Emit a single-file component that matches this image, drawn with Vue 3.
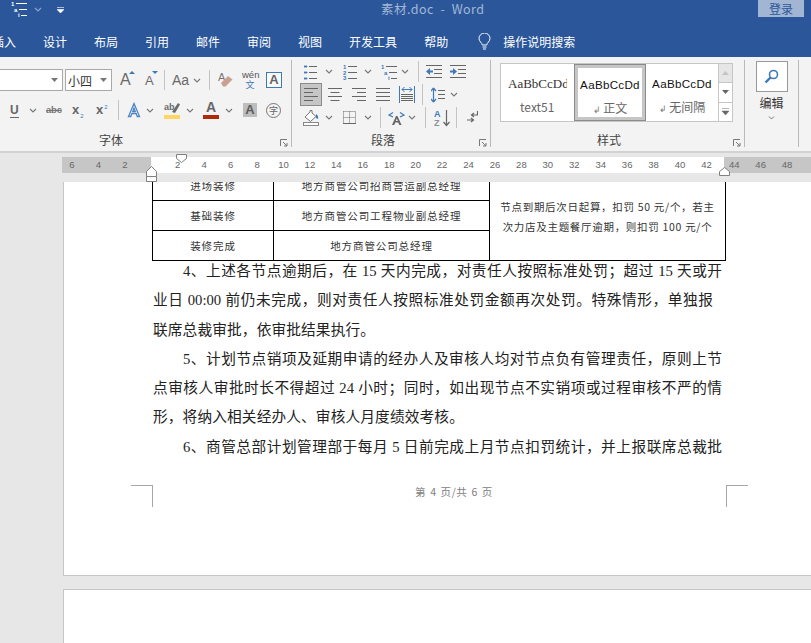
<script setup>
const tabs = ['插入', '设计', '布局', '引用', '邮件', '审阅', '视图', '开发工具', '帮助']

const rulerLeft = [6, 4, 2]
const rulerMid = Array.from({ length: 21 }, (_, i) => (i + 1) * 2)
const rulerRight = [44, 46, 48]

const tableRows = [
  { stage: '进场装修', owner: '地方商管公司招商营运副总经理' },
  { stage: '基础装修', owner: '地方商管公司工程物业副总经理' },
  { stage: '装修完成', owner: '地方商管公司总经理' },
]
</script>

<template>
  <div class="app">
    <header class="titlebar">
      <svg class="qat-list" width="17" height="16" viewBox="0 0 17 16">
        <g font-size="6" font-weight="700" font-family="Liberation Sans" fill="#fff"><text y="5">1</text><text x="3" y="11">a</text><text x="7" y="16">i</text></g>
        <path d="M5 2.500h11M8 8.500h8M10 14.500h6" stroke="#fff" />
      </svg>
      <svg class="ml6" width="8" height="5" viewBox="0 0 8 5"><path d="M1 1l3 3 3-3" fill="none" stroke="#8ba3c9" stroke-width="1.2" /></svg>
      <svg class="ml15" width="7" height="7" viewBox="0 0 7 7"><path d="M0 .5h7M0 2.5h7l-3.5 3.5z" fill="#fff" stroke="#fff" stroke-width=".6" /></svg>
      <span class="doc-title">素材.doc&nbsp; -&nbsp; Word</span>
      <button class="login" type="button">登录</button>
    </header>

    <nav class="tabbar">
      <span v-for="tab in tabs" :key="tab" class="tab">{{ tab }}</span>
      <svg class="bulb" width="13" height="17" viewBox="0 0 13 17">
        <path d="M4.3 12c0-2-3.3-3.500-3.300-6.500a5.500 5.500 0 0 1 11 0c0 3-3.300 4.500-3.300 6.500zM4.500 14h4M5 16h3" fill="none" stroke="#fff" />
      </svg>
      <span class="tab tell">操作说明搜索</span>
    </nav>

    <section class="ribbon">
      <div class="group group-font">
        <div class="font-rows">
          <div class="row">
            <div class="combo combo-name"><svg width="7" height="4" viewBox="0 0 7 4"><path d="M0 0h7L3.500 4z" fill="#777" /></svg></div>
            <div class="combo combo-size ml2">
              <span>小四</span>
              <svg width="7" height="4" viewBox="0 0 7 4"><path d="M0 0h7L3.500 4z" fill="#777" /></svg>
            </div>
            <span class="tool grow-a ml8">A<i class="tri tri-up"></i></span>
            <span class="tool shrink-a ml12">A<i class="tri tri-down"></i></span>
            <i class="sep ml9"></i>
            <span class="aa ml7">Aa</span>
            <svg class="ml5" width="8" height="5" viewBox="0 0 8 5"><path d="M1 1l3 3 3-3" fill="none" stroke="#777" stroke-width="1.100" /></svg>
            <i class="sep ml8"></i>
            <svg class="ml8" width="15" height="18" viewBox="0 0 15 18">
              <text x="0" y="10" font-size="11" font-family="Liberation Sans" fill="#777">A</text>
              <path d="M3 12l7-7 4.500 3.500-7 7H5z" fill="#c9a193" />
            </svg>
            <span class="wen ml9">wén<b>文</b></span>
            <span class="box-a ml8">A</span>
          </div>
          <div class="row">
            <span class="under ml10">U</span>
            <svg class="ml10" width="8" height="5" viewBox="0 0 8 5"><path d="M1 1l3 3 3-3" fill="none" stroke="#777" stroke-width="1.100" /></svg>
            <span class="strike ml9">abc</span>
            <span class="script ml10">x<sub>2</sub></span>
            <span class="script ml11">x<sup>2</sup></span>
            <i class="sep ml9"></i>
            <svg class="ml8" width="14" height="16" viewBox="0 0 14 16">
              <path d="M7 1.500L12.500 14.500h-2.200l-1.200-3H4.900l-1.200 3H1.500zM5.700 9.500h2.600L7 6z" fill="#fff" stroke="#4c84c4" stroke-width="1.300" />
            </svg>
            <svg class="ml5" width="8" height="5" viewBox="0 0 8 5"><path d="M1 1l3 3 3-3" fill="none" stroke="#777" stroke-width="1.100" /></svg>
            <svg class="ml10" width="16" height="18" viewBox="0 0 16 18">
              <text x="0" y="9" font-size="9" font-family="Liberation Sans" font-weight="700" fill="#6a6a6a">ab</text>
              <path d="M8 11L14 2l2 1.500-5 8.500z" fill="#6a6a6a" />
              <rect y="14" width="16" height="4" fill="#fdd663" />
            </svg>
            <svg class="ml6" width="8" height="5" viewBox="0 0 8 5"><path d="M1 1l3 3 3-3" fill="none" stroke="#777" stroke-width="1.100" /></svg>
            <span class="color-a ml9">A</span>
            <svg class="ml6" width="8" height="5" viewBox="0 0 8 5"><path d="M1 1l3 3 3-3" fill="none" stroke="#777" stroke-width="1.100" /></svg>
            <span class="shade-a ml10">A</span>
            <span class="ring ml9">字</span>
          </div>
        </div>
        <div class="label label-font">字体</div>
        <svg class="launcher" width="8" height="8" viewBox="0 0 8 8"><path d="M.5 7V.5H7M3 3l4 4M7 4v3H4" fill="none" stroke="#777" /></svg>
      </div>

      <div class="group group-para">
        <div class="para-rows">
          <div class="row">
            <svg class="ml12" width="13" height="16" viewBox="0 0 13 16">
              <path d="M0 2h3v1H0zM0 8h3v1H0zM0 14h3v1H0z" fill="#3e79b8" stroke="#3e79b8" stroke-width=".8" />
              <path d="M5 2.500h8M5 8.500h8M5 14.500h8" stroke="#666" />
            </svg>
            <svg class="ml8" width="8" height="5" viewBox="0 0 8 5"><path d="M1 1l3 3 3-3" fill="none" stroke="#777" stroke-width="1.100" /></svg>
            <svg class="ml10" width="14" height="16" viewBox="0 0 14 16">
              <g font-size="6" font-weight="700" font-family="Liberation Sans" fill="#3e79b8"><text y="5">1</text><text y="11">2</text><text y="16">3</text></g>
              <path d="M5 2.500h9M5 8.500h9M5 14.500h9" stroke="#666" />
            </svg>
            <svg class="ml7" width="8" height="5" viewBox="0 0 8 5"><path d="M1 1l3 3 3-3" fill="none" stroke="#777" stroke-width="1.100" /></svg>
            <svg class="ml9" width="16" height="16" viewBox="0 0 16 16">
              <g font-size="6" font-weight="700" font-family="Liberation Sans" fill="#3e79b8"><text y="5">1</text><text x="3" y="11">a</text><text x="7" y="16">i</text></g>
              <path d="M5 2.500h11M8 8.500h8M10 14.500h6" stroke="#666" />
            </svg>
            <svg class="ml4" width="8" height="5" viewBox="0 0 8 5"><path d="M1 1l3 3 3-3" fill="none" stroke="#777" stroke-width="1.100" /></svg>
            <i class="sep sep-tall ml9"></i>
            <svg class="ml7" width="16" height="14" viewBox="0 0 16 14">
              <path d="M0 .5h16M8 4.500h8M8 8.500h8M0 12.500h16" stroke="#666" />
              <path d="M0 6.500L4 3v2.500h3v2H4V10z" fill="#3e79b8" />
            </svg>
            <svg class="ml8" width="16" height="14" viewBox="0 0 16 14">
              <path d="M0 .5h16M8 4.500h8M8 8.500h8M0 12.500h16" stroke="#666" />
              <path d="M7 6.500L3 3v2.500H0v2h3V10z" fill="#3e79b8" />
            </svg>
          </div>
          <div class="row">
            <span class="align-on ml8">
              <svg width="14" height="13" viewBox="0 0 14 13"><path d="M0 .5h14M0 4.500h9M0 8.500h14M0 12.500h9" stroke="#666" /></svg>
            </span>
            <svg class="ml6" width="14" height="13" viewBox="0 0 14 13"><path d="M0 .5h14M2.500 4.500h9M0 8.500h14M2.500 12.500h9" stroke="#666" /></svg>
            <svg class="ml10" width="14" height="13" viewBox="0 0 14 13"><path d="M0 .5h14M5 4.500h9M0 8.500h14M5 12.500h9" stroke="#666" /></svg>
            <svg class="ml10" width="14" height="13" viewBox="0 0 14 13"><path d="M0 .5h14M0 4.500h14M0 8.500h14M0 12.500h14" stroke="#666" /></svg>
            <svg class="ml9" width="16" height="17" viewBox="0 0 16 17">
              <path d="M.5 0v17M15.500 0v17" stroke="#3e79b8" />
              <path d="M3 3.500h10M3 3.500l2.500-2.500M3 3.500L5.500 6M13 3.500L10.500 1M13 3.500L10.500 6" fill="none" stroke="#3e79b8" />
              <path d="M2 8.500h12M2 10.500h12M2 12.500h12M2 14.500h12" stroke="#666" />
            </svg>
            <i class="sep sep-tall ml7"></i>
            <svg class="ml8" width="14" height="16" viewBox="0 0 14 16">
              <path d="M2.500 1v14M2.500 1L0 4M2.500 1L5 4M2.500 15L0 12M2.500 15L5 12" fill="none" stroke="#3e79b8" stroke-width="1.200" />
              <path d="M7 3.500h7M7 7.500h7M7 11.500h7" stroke="#666" />
            </svg>
            <svg class="ml5" width="8" height="5" viewBox="0 0 8 5"><path d="M1 1l3 3 3-3" fill="none" stroke="#777" stroke-width="1.100" /></svg>
          </div>
          <div class="row">
            <svg class="ml11" width="16" height="16" viewBox="0 0 16 16">
              <path d="M2 7l5-5V.5h2V3l4 3.500-5.500 5z" fill="#fff" stroke="#777" />
              <path d="M13 4c2 1 2.500 3 2 5l-2-1z" fill="#3e79b8" />
              <rect x=".5" y="12.500" width="15" height="3" fill="#fff" stroke="#888" />
            </svg>
            <svg class="ml6" width="8" height="5" viewBox="0 0 8 5"><path d="M1 1l3 3 3-3" fill="none" stroke="#777" stroke-width="1.100" /></svg>
            <svg class="ml10" width="13" height="13" viewBox="0 0 13 13">
              <path d="M.5 .5h12v12M.5 .5v12M6.500 .5v12M.5 6.500h12" fill="none" stroke="#666" stroke-dasharray="1 1" />
              <path d="M0 12.500h13" stroke="#666" />
            </svg>
            <svg class="ml8" width="8" height="5" viewBox="0 0 8 5"><path d="M1 1l3 3 3-3" fill="none" stroke="#777" stroke-width="1.100" /></svg>
            <i class="sep sep-tall ml8"></i>
            <svg class="ml7" width="17" height="16" viewBox="0 0 17 16">
              <path d="M4 15L8 6h1.500l4 9h-2.200l-1-2.500H7.200l-1 2.500zM7.800 11h2l-1-2.500z" fill="#666" />
              <path d="M5 2.500L1 5l4 2M12 2.500L16 5l-4 2" fill="none" stroke="#3e79b8" stroke-width="1.200" />
            </svg>
            <svg class="ml3" width="8" height="5" viewBox="0 0 8 5"><path d="M1 1l3 3 3-3" fill="none" stroke="#777" stroke-width="1.100" /></svg>
            <i class="sep sep-tall ml9"></i>
            <svg class="ml8" width="16" height="18" viewBox="0 0 16 18">
              <g font-size="9" font-weight="700" font-family="Liberation Sans"><text x="0" y="8" fill="#3e79b8">A</text><text x="0" y="17" fill="#8a93a0">Z</text></g>
              <path d="M12.500 1v15M9.500 13l3 3.500 3-3.500" fill="none" stroke="#666" stroke-width="1.200" />
            </svg>
            <i class="sep sep-tall ml6"></i>
            <svg class="ml10" width="11" height="13" viewBox="0 0 11 13">
              <path d="M10.500 0v4H5M7 2L4.500 4 7 6" fill="none" stroke="#666" stroke-width="1.200" />
              <path d="M0 9h6M4 7l2.500 2L4 11" fill="none" stroke="#666" stroke-width="1.200" />
            </svg>
          </div>
        </div>
        <div class="label label-para">段落</div>
        <svg class="launcher" width="8" height="8" viewBox="0 0 8 8"><path d="M.5 7V.5H7M3 3l4 4M7 4v3H4" fill="none" stroke="#777" /></svg>
      </div>

      <div class="group group-styles">
        <div class="gallery">
          <div class="style-item style-first">
            <span class="sample sample-serif">AaBbCcDd</span>
            <span class="style-name">text51</span>
          </div>
          <div class="style-item style-on">
            <span class="sample">AaBbCcDd</span>
            <span class="style-name"><i class="para-mark">↲</i> 正文</span>
          </div>
          <div class="style-item">
            <span class="sample">AaBbCcDd</span>
            <span class="style-name"><i class="para-mark">↲</i> 无间隔</span>
          </div>
          <div class="gallery-scroll">
            <span class="scroll-btn scroll-off"><svg width="7" height="4" viewBox="0 0 7 4"><path d="M0 4h7L3.500 0z" fill="#c4c4c4" /></svg></span>
            <span class="scroll-btn"><svg width="7" height="4" viewBox="0 0 7 4"><path d="M0 0h7L3.500 4z" fill="#666" /></svg></span>
            <span class="scroll-btn"><svg width="7" height="7" viewBox="0 0 7 7"><path d="M0 .5h7M0 3h7L3.500 7z" fill="#666" stroke="#666" stroke-width=".5" /></svg></span>
          </div>
        </div>
        <div class="label label-styles">样式</div>
        <svg class="launcher" width="8" height="8" viewBox="0 0 8 8"><path d="M.5 7V.5H7M3 3l4 4M7 4v3H4" fill="none" stroke="#777" /></svg>
      </div>

      <div class="group group-edit">
        <span class="search-btn">
          <svg width="15" height="15" viewBox="0 0 15 15">
            <circle cx="9.500" cy="5.500" r="4" fill="#fff" stroke="#3e79b8" stroke-width="1.600" />
            <path d="M6.500 8.500L1.500 13.500" stroke="#3e79b8" stroke-width="2.400" />
          </svg>
        </span>
        <span class="edit-name">编辑</span>
        <svg class="edit-chev" width="7" height="4" viewBox="0 0 7 4"><path d="M1 .5l2.500 2.500L6 .5" fill="none" stroke="#777" /></svg>
      </div>
    </section>

    <div class="ruler-band">
      <div class="ruler">
        <div class="ruler-off ruler-left">
          <span v-for="n in rulerLeft" :key="n" class="tick">{{ n }}</span>
        </div>
        <div class="ruler-on">
          <span v-for="n in rulerMid" :key="n" class="tick">{{ n }}</span>
        </div>
        <div class="ruler-off ruler-right">
          <span v-for="n in rulerRight" :key="n" class="tick">{{ n }}</span>
        </div>
      </div>
      <svg class="marker marker-first" width="11" height="9" viewBox="0 0 11 9"><path d="M.5 .5h10v4l-5 4-5-4z" fill="#fff" stroke="#808080" /></svg>
      <svg class="marker marker-left" width="11" height="16" viewBox="0 0 11 16"><path d="M.5 10.500v-5l5-5 5 5v5zM.5 10.500h10v5H.5z" fill="#fff" stroke="#808080" /></svg>
      <svg class="marker marker-right" width="11" height="9" viewBox="0 0 11 9"><path d="M.5 8.500v-4l5-4 5 4v4z" fill="#fff" stroke="#808080" /></svg>
    </div>

    <main class="doc">
      <article class="page">
        <div class="plan-table">
          <template v-for="(row, i) in tableRows" :key="row.stage">
            <div class="cell cell-stage" :class="{ 'cell-cut': i === 0 }"><span>{{ row.stage }}</span></div>
            <div class="cell cell-owner" :class="{ 'cell-cut': i === 0 }"><span>{{ row.owner }}</span></div>
          </template>
          <div class="cell-rule">
            <div>节点到期后次日起算，扣罚 50 元/个，若主</div>
            <div>次力店及主题餐厅逾期，则扣罚 100 元/个</div>
          </div>
        </div>

        <div class="body-text">
          <div class="line first">4、上述各节点逾期后，在 15 天内完成，对责任人按照标准处罚；超过 15 天或开</div>
          <div class="line short">业日 00:00 前仍未完成，则对责任人按照标准处罚金额再次处罚。特殊情形，单独报</div>
          <div class="line end">联席总裁审批，依审批结果执行。</div>
          <div class="line first">5、计划节点销项及延期申请的经办人及审核人均对节点负有管理责任，原则上节</div>
          <div class="line">点审核人审批时长不得超过 24 小时；同时，如出现节点不实销项或过程审核不严的情</div>
          <div class="line end">形，将纳入相关经办人、审核人月度绩效考核。</div>
          <div class="line first">6、商管总部计划管理部于每月 5 日前完成上月节点扣罚统计，并上报联席总裁批</div>
        </div>

        <footer class="page-foot">
          <i class="corner corner-l"></i>
          <span class="foot-text">第 4 页/共 6 页</span>
          <i class="corner corner-r"></i>
        </footer>
      </article>
      <article class="page page-next"></article>
    </main>
  </div>
</template>

<style scoped>
.app {
  width: 811px;
  height: 643px;
  overflow: hidden;
  display: flex;
  flex-direction: column;
  font-family: "Noto Sans CJK SC", "Liberation Sans", sans-serif;
  background: #e6e7e6;
}

.ml2 { margin-left: 2px; }
.ml3 { margin-left: 3px; }
.ml4 { margin-left: 4px; }
.ml5 { margin-left: 5px; }
.ml6 { margin-left: 6px; }
.ml7 { margin-left: 7px; }
.ml8 { margin-left: 8px; }
.ml9 { margin-left: 9px; }
.ml10 { margin-left: 10px; }
.ml11 { margin-left: 11px; }
.ml12 { margin-left: 12px; }
.ml15 { margin-left: 15px; }

svg {
  display: block;
  flex: none;
}

i {
  font-style: normal;
}

/* title bar and tabs */
.titlebar {
  height: 28px;
  flex: none;
  display: flex;
  align-items: flex-start;
  background: #2b579a;
  padding-left: 11px;
  box-sizing: border-box;
}

.titlebar > svg {
  margin-top: 7px;
}

.titlebar > .qat-list {
  margin-top: 1px;
}

.doc-title {
  margin-left: 317px;
  margin-top: 0;
  font-size: 12.5px;
  line-height: 18px;
  color: #a4b8d6;
  letter-spacing: 0.45px;
  white-space: nowrap;
}

.login {
  margin-left: auto;
  margin-right: 7px;
  width: 46px;
  height: 17px;
  padding: 0;
  border: 0;
  background: #a2b5d2;
  color: #2b579a;
  font: 12px/17px "Noto Sans CJK SC", sans-serif;
}

.tabbar {
  height: 29px;
  flex: none;
  display: flex;
  align-items: center;
  gap: 27px;
  background: #2b579a;
  margin-left: -8px;
  padding-bottom: 2px;
  box-sizing: border-box;
}

.tab {
  color: #fff;
  font-size: 12px;
  white-space: nowrap;
}

.bulb {
  margin-left: 3px;
}

.tell {
  margin-left: -15px;
}

/* ribbon */
.ribbon {
  height: 96px;
  flex: none;
  display: flex;
  padding-top: 3px;
  box-sizing: border-box;
  background: #f3f3f3;
  border-bottom: 2px solid #d2d2d2;
}

.group {
  height: 87px;
  position: relative;
  display: flex;
  flex-direction: column;
  box-sizing: border-box;
  border-right: 1px solid #b9b9b9;
}

.group-font { width: 292px; }
.group-para { width: 199px; }
.group-styles { width: 254px; }
.group-edit {
  width: 54px;
  align-items: center;
}

.font-rows {
  padding-top: 9px;
  display: flex;
  flex-direction: column;
  gap: 8px;
  height: 74px;
  box-sizing: border-box;
}

.font-rows .row {
  height: 22px;
}

.para-rows {
  height: 74px;
  display: flex;
  flex-direction: column;
}

.para-rows .row {
  height: 23px;
  flex: none;
}

.row {
  display: flex;
  align-items: center;
}

.sep {
  flex: none;
  width: 1px;
  height: 20px;
  background: #c4c4c4;
}

.sep-tall {
  height: 21px;
}

.label {
  margin-top: auto;
  text-align: center;
  font-size: 12px;
  line-height: 14px;
  color: #444;
  padding-bottom: 0;
}

.label-font { padding-right: 69px; }
.label-para { padding-right: 16px; }
.label-styles { padding-right: 17px; }

.launcher {
  position: absolute;
  right: 3px;
  bottom: 0;
}

.combo {
  flex: none;
  height: 22px;
  box-sizing: border-box;
  background: #fff;
  border: 1px solid #a9a9a9;
  display: flex;
  align-items: center;
  justify-content: flex-end;
  padding-right: 4px;
}

.combo-name {
  width: 63px;
  border-left: 0;
}

.combo-size {
  width: 47px;
  justify-content: space-between;
  padding-left: 2px;
  font-size: 12px;
  color: #333;
}

.tool {
  flex: none;
  position: relative;
  font-family: "Liberation Sans", sans-serif;
  color: #6a6a6a;
  display: block;
}

.grow-a {
  width: 13px;
  font-size: 16px;
  line-height: 18px;
}

.shrink-a {
  width: 10px;
  font-size: 13px;
  line-height: 16px;
  padding-top: 2px;
}

.tri {
  position: absolute;
  width: 0;
  height: 0;
  border-left: 3px solid transparent;
  border-right: 3px solid transparent;
}

.tri-up {
  top: 0;
  left: 9px;
  border-bottom: 3px solid #3e79b8;
}

.tri-down {
  top: 0;
  left: 7px;
  border-top: 3px solid #3e79b8;
}

.aa {
  flex: none;
  width: 16px;
  font: 14px/18px "Liberation Sans", sans-serif;
  color: #6a6a6a;
}

.wen {
  flex: none;
  width: 16px;
  font: 9.500px/10px "Liberation Sans", "Noto Sans CJK SC", sans-serif;
  color: #555;
  text-align: center;
  white-space: nowrap;
}

.wen b {
  display: block;
  font-size: 9px;
  font-weight: 400;
  color: #3e79b8;
}

.box-a {
  flex: none;
  width: 16px;
  height: 16px;
  box-sizing: border-box;
  border: 1px solid #3e79b8;
  text-align: center;
  font: 700 13px/14px "Liberation Sans", sans-serif;
  color: #666;
  background: #fafafa;
}

.under {
  flex: none;
  width: 9px;
  font: 700 12px/14px "Liberation Sans", sans-serif;
  color: #666;
  border-bottom: 1px solid #666;
}

.strike {
  flex: none;
  width: 16px;
  font: 700 9.500px/12px "Liberation Sans", sans-serif;
  letter-spacing: -0.2px;
  color: #777;
  text-decoration: line-through;
}

.script {
  flex: none;
  width: 13px;
  font: 700 13px/16px "Liberation Sans", sans-serif;
  color: #666;
}

.script sub,
.script sup {
  font-size: 6px;
  font-weight: 400;
  line-height: 0;
  color: #3e79b8;
  margin-left: 1px;
}

.color-a {
  flex: none;
  width: 16px;
  height: 18px;
  box-sizing: border-box;
  text-align: center;
  font: 700 14px/13px "Liberation Sans", sans-serif;
  color: #666;
  border-bottom: 4px solid #b02a07;
}

.shade-a {
  flex: none;
  width: 14px;
  height: 14px;
  text-align: center;
  font: 700 13px/14px "Liberation Sans", sans-serif;
  color: #5c5c5c;
  background: #bdbdbd;
}

.ring {
  flex: none;
  width: 15px;
  height: 15px;
  box-sizing: border-box;
  border: 1px solid #777;
  border-radius: 50%;
  text-align: center;
  font-size: 9px;
  line-height: 13px;
  color: #666;
}

.align-on {
  flex: none;
  width: 22px;
  height: 23px;
  box-sizing: border-box;
  border: 1px solid #8b8b8b;
  background: #c6c6c6;
  display: flex;
  align-items: center;
  justify-content: center;
}

/* style gallery */
.gallery {
  margin: 3px 0 0 9px;
  width: 233px;
  height: 59px;
  box-sizing: border-box;
  display: flex;
  background: #fff;
  border: 1px solid #c6c6c6;
}

.style-item {
  flex: none;
  width: 72px;
  height: 57px;
  box-sizing: border-box;
  display: flex;
  flex-direction: column;
  align-items: center;
  padding-top: 10px;
  overflow: hidden;
}

.style-first {
  width: 73px;
  align-items: flex-start;
  padding-left: 7px;
}

.style-on {
  border: 1px solid #8b8b8b;
  outline: 0;
  box-shadow: inset 0 0 0 3px #c6c6c6;
}

.sample {
  font: 11.600px/20px "Liberation Sans", sans-serif;
  letter-spacing: 0.3px;
  color: #111;
  white-space: nowrap;
}

.sample-serif {
  display: block;
  width: 59px;
  overflow: hidden;
  font-family: "Liberation Serif", serif;
  font-size: 13px;
  color: #333;
  letter-spacing: 0;
}

.style-name {
  margin-top: 4px;
  font-size: 12px;
  line-height: 18px;
  color: #666;
  white-space: nowrap;
}

.style-first .style-name {
  margin-left: 12px;
}

.para-mark {
  font-size: 9px;
  color: #777;
}

.gallery-scroll {
  flex: 1;
  display: flex;
  flex-direction: column;
  border-left: 1px solid #c6c6c6;
}

.scroll-btn {
  flex: 1;
  display: flex;
  align-items: center;
  justify-content: center;
  border-bottom: 1px solid #c6c6c6;
}

.scroll-btn:last-child {
  border-bottom: 0;
}

.scroll-off {
  background: #e6e6e6;
}

/* editing */
.search-btn {
  margin-top: 1px;
  width: 32px;
  height: 31px;
  box-sizing: border-box;
  border: 1px solid #9a9a9a;
  background: #fff;
  display: flex;
  align-items: center;
  justify-content: center;
}

.edit-name {
  margin-top: 2px;
  font-size: 12px;
  line-height: 18px;
  color: #333;
}

.edit-chev {
  margin-top: 4px;
}

/* ruler */
.ruler-band {
  height: 29px;
  flex: none;
  position: relative;
  background: #e6e7e6;
  padding-top: 4px;
  box-sizing: border-box;
}

.ruler {
  margin-left: 62px;
  height: 16px;
  display: flex;
  overflow: hidden;
}

.ruler-off,
.ruler-on {
  display: flex;
  height: 16px;
  flex: none;
}

.ruler-off {
  background: #c6c6c6;
}

.ruler-left {
  width: 89px;
  justify-content: flex-end;
  padding-right: 13px;
  box-sizing: border-box;
}

.ruler-on {
  width: 573px;
  background: #fff;
  padding-left: 13.500px;
  box-sizing: border-box;
}

.ruler-right {
  flex: 1;
  padding-left: 0;
}

.ruler-right .tick:first-child {
  margin-left: -3px;
}

.tick {
  flex: none;
  width: 26.450px;
  text-align: center;
  font: 9.500px/16px "Liberation Sans", sans-serif;
  color: #666;
}

.marker {
  position: absolute;
}

.marker-first {
  left: 176px;
  top: 1px;
}

.marker-left {
  left: 146px;
  top: 13px;
}

.marker-right {
  left: 719px;
  top: 14px;
}

/* document */
.doc {
  flex: 1;
  min-height: 0;
  padding-left: 63px;
  display: flex;
  flex-direction: column;
  overflow: hidden;
}

.page {
  flex: none;
  width: 748px;
  height: 394px;
  box-sizing: border-box;
  background: #fff;
  border-left: 1px solid #c6c6c6;
  border-bottom: 1px solid #c6c6c6;
}

.page-next {
  height: 60px;
  margin-top: 13px;
  border-bottom: 0;
  border-top: 1px solid #c6c6c6;
}

.plan-table {
  margin-left: 88px;
  width: 574px;
  box-sizing: border-box;
  display: grid;
  grid-template-columns: 121px 216px 235px;
  grid-template-rows: 19px 30px 29px;
  border-left: 1px solid #000;
  border-right: 1px solid #000;
  border-bottom: 1px solid #000;
  color: #333;
  font-size: 10.500px;
  letter-spacing: 0.9px;
}

.cell {
  box-sizing: border-box;
  border-right: 1px solid #000;
  border-bottom: 1px solid #000;
  text-align: center;
  line-height: 28px;
  overflow: hidden;
  display: flex;
  justify-content: center;
  align-items: flex-end;
}

.cell-stage { grid-column: 1; }
.cell-owner { grid-column: 2; }

.cell:nth-child(5),
.cell:nth-child(6) {
  border-bottom: 0;
}

.cell-rule {
  grid-column: 3;
  grid-row: 1 / 4;
  padding-top: 15px;
  text-align: center;
  line-height: 20px;
  font-size: 10.500px;
  letter-spacing: 0.7px;
  white-space: nowrap;
}

.body-text {
  margin: -4px 0 0 89px;
  width: 573px;
  font-family: "Liberation Serif", "Noto Sans CJK SC", serif;
  font-size: 14.670px;
  line-height: 29.300px;
  color: #222;
}

.line {
  text-align: justify;
  text-align-last: justify;
  padding-right: 4px;
}

.first {
  padding-left: 30px;
}

.short {
  padding-right: 13px;
}

.end {
  text-align-last: left;
  letter-spacing: 0.15px;
}

.page-foot {
  margin: 23px 0 0 67px;
  width: 617px;
  height: 22px;
  display: flex;
}

.corner {
  flex: none;
  width: 22px;
  height: 22px;
  box-sizing: border-box;
  border-top: 1px solid #a6a6a6;
}

.corner-l {
  border-right: 1px solid #a6a6a6;
}

.corner-r {
  border-left: 1px solid #a6a6a6;
}

.foot-text {
  flex: 1;
  text-align: center;
  padding-left: 29px;
  font-size: 10.500px;
  line-height: 13px;
  letter-spacing: 0.6px;
  word-spacing: 1px;
  color: #808080;
}
</style>
